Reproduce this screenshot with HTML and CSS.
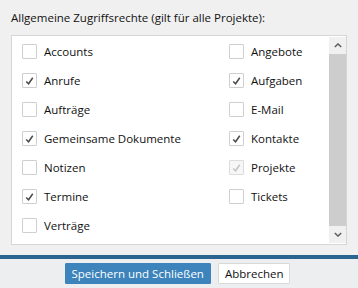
FILE: index.html
```html
<!DOCTYPE html>
<html lang="de">
<head>
  <meta charset="UTF-8" />
  <title>Zugriffsrechte</title>
  <link rel="stylesheet" href="styles.css">
</head>
<body>

  <div class="dialog-body">
    <div class="section-title">Allgemeine Zugriffsrechte (gilt für alle Projekte):</div>

    <div class="rights-box">
      <div class="rights-list">
        <label class="right"><span class="box"></span>Accounts</label>
        <label class="right"><span class="box"></span>Angebote</label>

        <label class="right"><span class="box checked"><svg viewBox="0 0 14 14"><polyline points="3.5,7.5 6,10 10.5,3.5"/></svg></span>Anrufe</label>
        <label class="right"><span class="box checked"><svg viewBox="0 0 14 14"><polyline points="3.5,7.5 6,10 10.5,3.5"/></svg></span>Aufgaben</label>

        <label class="right"><span class="box"></span>Aufträge</label>
        <label class="right"><span class="box"></span>E-Mail</label>

        <label class="right"><span class="box checked"><svg viewBox="0 0 14 14"><polyline points="3.5,7.5 6,10 10.5,3.5"/></svg></span>Gemeinsame Dokumente</label>
        <label class="right"><span class="box checked"><svg viewBox="0 0 14 14"><polyline points="3.5,7.5 6,10 10.5,3.5"/></svg></span>Kontakte</label>

        <label class="right"><span class="box"></span>Notizen</label>
        <label class="right"><span class="box checked disabled"><svg viewBox="0 0 14 14"><polyline points="3.5,7.5 6,10 10.5,3.5"/></svg></span>Projekte</label>

        <label class="right"><span class="box checked"><svg viewBox="0 0 14 14"><polyline points="3.5,7.5 6,10 10.5,3.5"/></svg></span>Termine</label>
        <label class="right"><span class="box"></span>Tickets</label>

        <label class="right"><span class="box"></span>Verträge</label>
      </div>

      <!-- fake scrollbar, the list is scrollable in the app -->
      <div class="scrollbar">
        <div class="arrow"><svg viewBox="0 0 10 6"><polyline points="1,5 5,1 9,5"/></svg></div>
        <div class="thumb"></div>
        <div class="arrow"><svg viewBox="0 0 10 6"><polyline points="1,1 5,5 9,1"/></svg></div>
      </div>
    </div>
  </div>

  <div class="dialog-footer">
    <button class="btn btn-primary">Speichern und Schließen</button>
    <button class="btn">Abbrechen</button>
  </div>

</body>
</html>
```

FILE: styles.css
```css
body {
  margin: 0;
  font-family: "Open Sans", "Noto Sans", sans-serif;
  font-size: 11.5px;
  color: #111;
  background: #f0f0f0;
  width: 358px;
  height: 288px;
  overflow: hidden;
}

.dialog-body {
  padding: 9px 11px 10px 11px;
}

.section-title {
  line-height: 17px;
  margin-bottom: 9px;
}

.rights-box {
  display: flex;
  height: 208px;
  border: 1px solid #d6d6d6;
  background: #fff;
}

.rights-list {
  flex: 1;
  display: grid;
  grid-template-columns: 207px 1fr;
  grid-auto-rows: 29px;
  padding: 1px 0 0 10px;
  align-content: start;
}

.right {
  display: flex;
  align-items: center;
  gap: 7px;
  line-height: 17px;
}

.box {
  width: 13px;
  height: 13px;
  border: 1px solid #cfcfcf;
  border-radius: 1px;
  background: #fff;
  display: flex;
  align-items: center;
  justify-content: center;
  flex-shrink: 0;
}

.box svg {
  width: 14px;
  height: 14px;
  fill: none;
  stroke: #4a4a4a;
  stroke-width: 1.6;
}

.box.disabled {
  background: #f6f6f6;
  border-color: #dcdcdc;
}

.box.disabled svg {
  stroke: #c4c4c4;
}

.scrollbar {
  width: 17px;
  margin: 1px 0 1px 0;
  background: #f0f0f0;
  display: flex;
  flex-direction: column;
}

.arrow {
  height: 17px;
  display: flex;
  align-items: center;
  justify-content: center;
}

.arrow svg {
  width: 8px;
  height: 5px;
  fill: none;
  stroke: #606060;
  stroke-width: 1.8;
}

.thumb {
  flex: 1;
  background: #cdcdcd;
}

.dialog-footer {
  border-top: 4px solid #2a6491;
  background: #eceef0;
  height: 29px;
  display: flex;
  justify-content: center;
  align-items: center;
  gap: 7px;
  padding-right: 3px;
}

.btn {
  font-family: "Open Sans", "Noto Sans", sans-serif;
  font-size: 11.5px;
  height: 21px;
  padding: 0 6px;
  border: 1px solid #d9d9d9;
  border-radius: 1px;
  background: #fff;
  color: #111;
}

.btn-primary {
  background: #3c84bb;
  border-color: #3c84bb;
  color: #fff;
}
```
